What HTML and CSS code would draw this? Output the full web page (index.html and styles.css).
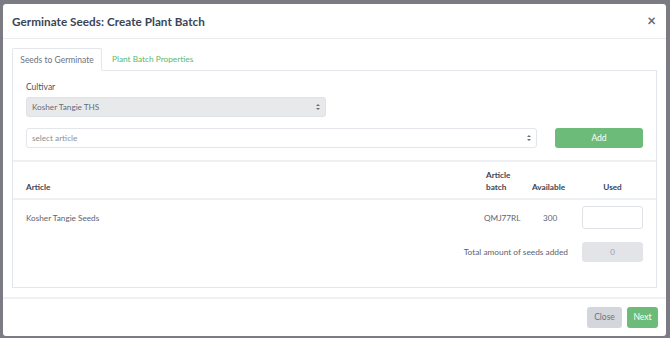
FILE: index.html
```html
<!DOCTYPE html>
<html>
<head>
<meta charset="utf-8">
<link rel="stylesheet" href="styles.css">
</head>
<body>
<div class="backdrop">
  <div class="modal">
    <div class="modal-header">
      <h1 class="title">Germinate Seeds: Create Plant Batch</h1>
      <span class="close-x">&times;</span>
    </div>
    <div class="modal-body">
      <div class="tabs">
        <div class="tab active">Seeds to Germinate</div>
        <div class="tab">Plant Batch Properties</div>
      </div>
      <div class="panel">
        <div class="panel-top">
          <label class="label">Cultivar</label>
          <div class="select disabled half">Kosher Tangie THS<span class="caret"></span></div>
          <div class="add-row">
            <div class="select grow placeholder">select article<span class="caret"></span></div>
            <button class="btn btn-green add">Add</button>
          </div>
        </div>
        <div class="table">
          <div class="thead">
            <div class="c-article">Article</div>
            <div class="c-batch">Article<br>batch</div>
            <div class="c-avail">Available</div>
            <div class="c-used">Used</div>
          </div>
          <div class="trow">
            <div class="c-article">Kosher Tangie Seeds</div>
            <div class="c-batch">QMJ77RL</div>
            <div class="c-avail">300</div>
            <div class="c-used"><div class="input"></div></div>
          </div>
          <div class="total">
            <div class="total-label">Total amount of seeds added</div>
            <div class="input disabled">0</div>
          </div>
        </div>
      </div>
    </div>
    <div class="modal-footer">
      <button class="btn btn-gray">Close</button>
      <button class="btn btn-green">Next</button>
    </div>
  </div>
</div>
</body>
</html>
```
FILE: styles.css
```css
* { box-sizing: border-box; }
html, body { margin: 0; padding: 0; }
body {
  width: 670px; height: 338px; overflow: hidden;
  background: #7b7b84;
  font-family: Lato, "Open Sans", sans-serif;
  color: #5b6472;
}
.backdrop { padding: 4px 4px 0 3px; }
.modal {
  width: 663px; height: 332px;
  background: #fff;
  border-radius: 3px;
  display: flex; flex-direction: column;
}
.modal-header {
  height: 35px;
  border-bottom: 1px solid #e9ebef;
  display: flex; align-items: center; justify-content: space-between;
  padding: 0 10px 0 9px;
}
.title { margin: 0; font-size: 11.7px; font-weight: 700; color: #3a4456; letter-spacing: 0.05px; }
.close-x { font-size: 15px; color: #666a73; font-weight: 700; line-height: 1; }
.modal-body { padding: 9px 9px 9px 9px; flex: 1; display: flex; flex-direction: column; }
.tabs { display: flex; height: 22px; }
.tab {
  font-size: 8.3px; padding: 0 10px; line-height: 22px; color: #5cb86b;
}
.tab.active {
  font-size: 8.5px;
  color: #6b7380;
  border: 1px solid #e3e6ea; border-bottom-color: #fff;
  border-radius: 2px 2px 0 0;
  margin-bottom: -1px; background: #fff; position: relative;
  width: 90px; text-align: center; padding: 0;
}
.panel {
  border: 1px solid #e3e6ea;
  height: 218px;
}
.panel-top { padding: 11px 13px 12px 13px; border-bottom: 2px solid #eef0f3; }
.label { display: block; font-size: 8.5px; color: #4a5261; margin-bottom: 5px; }
.select {
  position: relative;
  height: 20px; border: 1px solid #e3e6ea; border-radius: 3px;
  font-size: 8.2px; line-height: 18px; padding: 0 5px; color: #666d78;
}
.select.disabled { background: #e8e9eb; border-color: #e0e2e6; }
.half { width: 300px; }
.placeholder { color: #8a9099; }
.caret { position: absolute; right: 5px; top: 6px; width: 4px; height: 6px; }
.caret::before, .caret::after {
  content: ""; position: absolute; left: 0;
  border-left: 2px solid transparent; border-right: 2px solid transparent;
}
.caret::before { top: 0; border-bottom: 2.5px solid #6a6f78; }
.caret::after { bottom: 0; border-top: 2.5px solid #6a6f78; }
.add-row { display: flex; gap: 18px; margin-top: 11px; }
.grow { flex: 1; }
.btn {
  border: none; border-radius: 3px; font-family: inherit; font-size: 8.5px;
  height: 20px; padding: 0 6px; color: #fff;
}
.btn-green { background: #6dbb78; }
.btn-gray { background: #d3d6dd; color: #6c7380; }
.add { width: 88px; }
.table { padding: 0 13px 0 13px; }
.thead, .trow { display: flex; align-items: flex-end; }
.thead {
  height: 38px; border-bottom: 2px solid #eef0f3; margin: 0 -13px; padding: 0 13px 5px;
  font-weight: 700; font-size: 8.2px; color: #3c4556; line-height: 12px;
}
.c-article { flex: 1; }
.c-batch { width: 46px; }
.c-avail { width: 50px; }
.c-used { width: 61px; text-align: center; }
.trow { align-items: center; height: 36px; font-size: 8.2px; }
.trow .c-batch { margin-left: -2px; width: 48px; }
.trow .c-avail { text-align: left; padding-left: 11px; }
.input {
  height: 23px; width: 61px; border: 1px solid #dfe2e7; border-radius: 3px; background: #fff;
}
.total { display: flex; justify-content: flex-end; align-items: center; gap: 14px; margin-top: 6px; font-size: 8.3px; }
.input.disabled {
  height: 20px; background: #e2e4e8; border-color: #e2e4e8; color: #9aa0a8;
  text-align: center; line-height: 18px; font-size: 8px;
}
.modal-footer {
  height: 40px; border-top: 2px solid #eef0f3;
  display: flex; justify-content: flex-end; align-items: center; gap: 5px;
  padding: 0 8px 0 0;
}
.modal-footer .btn { height: 21px; }
.modal-footer .btn-gray { width: 35px; padding: 0; }
.modal-footer .btn-green { width: 31px; padding: 0; }
```
